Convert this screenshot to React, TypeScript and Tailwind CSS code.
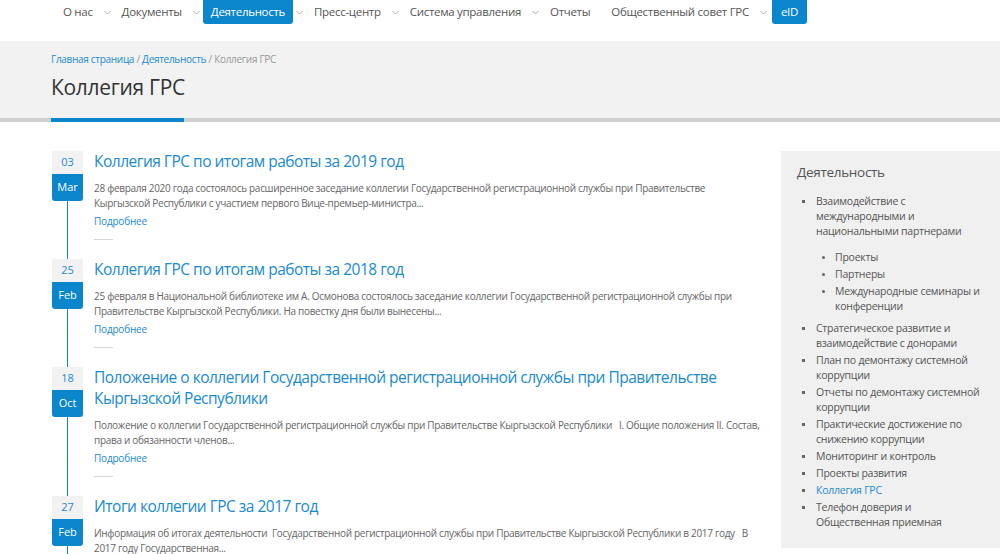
import React from "react";

const navItems = [
  { label: "О нас", drop: true },
  { label: "Документы", drop: true },
  { label: "Деятельность", drop: true, active: true },
  { label: "Пресс-центр", drop: true },
  { label: "Система управления", drop: true },
  { label: "Отчеты", drop: false },
  { label: "Общественный совет ГРС", drop: true },
];

const news = [
  {
    day: "03",
    month: "Mar",
    title: ["Коллегия ГРС по итогам работы за 2019 год"],
    text: [
      "28 февраля 2020 года состоялось расширенное заседание коллегии Государственной регистрационной службы при Правительстве",
      "Кыргызской Республики с участием первого Вице-премьер-министра...",
    ],
  },
  {
    day: "25",
    month: "Feb",
    title: ["Коллегия ГРС по итогам работы за 2018 год"],
    text: [
      "25 февраля в Национальной библиотеке им А. Осмонова состоялось заседание коллегии Государственной регистрационной службы при",
      "Правительстве Кыргызской Республики. На повестку дня были вынесены...",
    ],
  },
  {
    day: "18",
    month: "Oct",
    title: [
      "Положение о коллегии Государственной регистрационной службы при Правительстве",
      "Кыргызской Республики",
    ],
    text: [
      "Положение о коллегии Государственной регистрационной службы при Правительстве Кыргызской Республики   I. Общие положения II. Состав,",
      "права и обязанности членов...",
    ],
  },
  {
    day: "27",
    month: "Feb",
    title: ["Итоги коллегии ГРС за 2017 год"],
    text: [
      "Информация об итогах деятельности  Государственной регистрационной службы при Правительстве Кыргызской Республики в 2017 году   В",
      "2017 году Государственная...",
    ],
  },
];

const Chevron = () => (
  <svg width="7" height="5" viewBox="0 0 7 5" className="text-gray-400">
    <path d="M0.5 1 L3.5 4 L6.5 1" fill="none" stroke="currentColor" strokeWidth="0.9" />
  </svg>
);

const Bullet = ({ round }: { round?: boolean }) => (
  <span
    className={`mt-[6px] h-[3px] w-[3px] shrink-0 bg-[#666] ${round ? "rounded-full" : ""}`}
  />
);

const SideItem = ({ lines, active }: { lines: string[]; active?: boolean }) => (
  <li className="flex gap-[11px]">
    <Bullet />
    <div className={active ? "text-[#1a8ad0]" : "text-[#555]"}>
      {lines.map((l) => (
        <div key={l} className="whitespace-nowrap">
          {l}
        </div>
      ))}
    </div>
  </li>
);

export default function App() {
  return (
    <div
      className="h-[554px] w-[1000px] overflow-hidden bg-white text-[#555]"
      style={{ fontFamily: "'Open Sans', 'Noto Sans', sans-serif" }}
    >
      {/* top menu */}
      <nav className="flex h-[41px] items-start pl-[55px] text-[11.5px] tracking-[-0.3px] text-[#555]">
        {navItems.map((item) => (
          <div key={item.label} className="flex h-[24px] items-center">
            <span
              className={`flex h-[24px] items-center px-[8px] ${
                item.active ? "rounded-b-[3px] bg-[#0b86cc] text-white" : ""
              }`}
            >
              {item.label}
            </span>
            {item.drop ? (
              <span className="flex w-[13px] justify-center">
                <Chevron />
              </span>
            ) : (
              <span className="w-[5px]" />
            )}
          </div>
        ))}
        <span className="ml-[2px] flex h-[24px] items-center rounded-b-[3px] bg-[#0b86cc] px-[9px] text-white">
          eID
        </span>
      </nav>

      {/* page header */}
      <div className="relative h-[81px] bg-[#f2f2f2] pl-[51px] pt-[11px]">
        <div className="text-[10px] leading-[15px] tracking-[-0.3px] text-[#999]">
          <span className="text-[#1a8ad0]">Главная страница</span> /{" "}
          <span className="text-[#1a8ad0]">Деятельность</span> / Коллегия ГРС
        </div>
        <h1 className="mt-[6px] text-[21px] leading-[28px] tracking-[-0.3px] text-[#333]">
          Коллегия ГРС
        </h1>
        <div className="absolute bottom-0 left-0 right-0 h-[4px] bg-[#cfcfcf]">
          <div className="ml-[51px] h-[4px] w-[133px] bg-[#0b86cc]" />
        </div>
      </div>

      <div className="flex pl-[51px] pt-[29px]">
        {/* news timeline */}
        <div className="w-[711px]">
          {news.map((n) => (
            <div key={n.day + n.month} className="flex">
              <div className="flex w-[43px] shrink-0 flex-col">
                <div className="ml-[1px] flex h-[23px] w-[31px] items-center justify-center bg-[#f2f2f2] text-[11px] text-[#1a8ad0]">
                  {n.day}
                </div>
                <div className="ml-[1px] flex h-[27px] w-[31px] items-center justify-center rounded-b-[3px] bg-[#0b86cc] text-[11px] text-white">
                  {n.month}
                </div>
                <div className="ml-[16px] w-[1px] flex-1 bg-[#0b86cc]" />
              </div>
              <div className="pb-[19px]">
                <div className="text-[15.5px] leading-[21px] tracking-[-0.5px] text-[#1a8ad0]">
                  {n.title.map((t) => (
                    <div key={t} className="whitespace-nowrap">
                      {t}
                    </div>
                  ))}
                </div>
                <div className="mt-[9px] text-[10px] leading-[15px] tracking-[-0.3px] text-[#666]">
                  {n.text.map((t) => (
                    <div key={t} className="whitespace-pre">
                      {t}
                    </div>
                  ))}
                </div>
                <div className="mt-[3px] text-[10px] leading-[15px] tracking-[-0.2px] text-[#1a8ad0]">
                  Подробнее
                </div>
                <div className="mt-[10px] h-[1px] w-[19px] bg-[#d5d5d5]" />
              </div>
            </div>
          ))}
        </div>

        {/* sidebar */}
        <aside className="ml-[19px] h-[397px] flex-1 bg-[#f0f0f0] pl-[16px] pt-[11px] text-[10.5px] leading-[15px] tracking-[-0.25px]">
          <div className="text-[13.5px] leading-[20px] tracking-[-0.3px] text-[#555]">
            Деятельность
          </div>
          <ul className="mt-[12px] flex flex-col gap-[2px] pl-[5px]">
            <li className="flex gap-[11px]">
              <Bullet />
              <div>
                <div>Взаимодействие с</div>
                <div>международными и</div>
                <div>национальными партнерами</div>
                <ul className="mb-[5px] mt-[11px] flex flex-col gap-[2px] pl-[6px]">
                  <li className="flex gap-[10px]">
                    <Bullet round />
                    <div>Проекты</div>
                  </li>
                  <li className="flex gap-[10px]">
                    <Bullet round />
                    <div>Партнеры</div>
                  </li>
                  <li className="flex gap-[10px]">
                    <Bullet round />
                    <div>
                      <div>Международные семинары и</div>
                      <div>конференции</div>
                    </div>
                  </li>
                </ul>
              </div>
            </li>
            <SideItem lines={["Стратегическое развитие и", "взаимодействие с донорами"]} />
            <SideItem lines={["План по демонтажу системной", "коррупции"]} />
            <SideItem lines={["Отчеты по демонтажу системной", "коррупции"]} />
            <SideItem lines={["Практические достижение по", "снижению коррупции"]} />
            <SideItem lines={["Мониторинг и контроль"]} />
            <SideItem lines={["Проекты развития"]} />
            <SideItem lines={["Коллегия ГРС"]} active />
            <SideItem lines={["Телефон доверия и", "Общественная приемная"]} />
          </ul>
        </aside>
      </div>
    </div>
  );
}
